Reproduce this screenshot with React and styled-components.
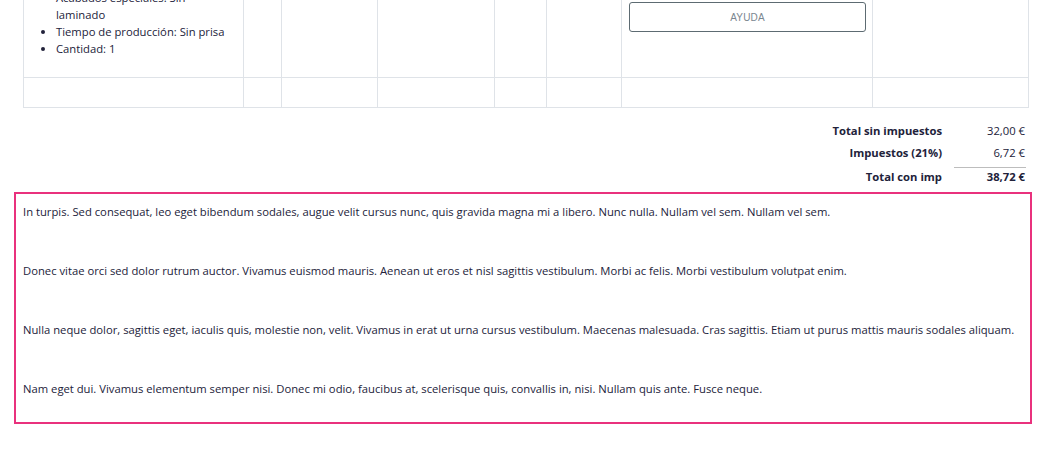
import React from "react";
import styled, { createGlobalStyle } from "styled-components";

const GlobalStyle = createGlobalStyle`
    body {
        margin: 0;
        background: #fff;
        font-family: "Open Sans", "Liberation Sans", sans-serif;
        color: #22223a;
        font-size: 11.25px;
    }
`;

const Page = styled.div`
    width: 1018px;
    padding: 0 0 0 14px;
    margin-top: -12px;
`;

const OrderTable = styled.table`
    margin: 0 0 0 9px;
    width: 1006px;
    border-collapse: collapse;
    table-layout: fixed;
    border: 1px solid #dfe3e8;
`;

const Cell = styled.td`
    border: 1px solid #dfe3e8;
    vertical-align: top;
    padding: ${(p) => p.$pad || "0 8px"};
    height: ${(p) => p.$h || "auto"};
`;

const Specs = styled.ul`
    margin: 0 0 20px 0;
    padding-left: 24px;
    line-height: 17px;
    font-size: 11.25px;
`;

const HelpButton = styled.button`
    display: block;
    width: 100%;
    height: 30px;
    background: #fff;
    border: 1px solid #5d6b72;
    border-radius: 3px;
    font-family: "Liberation Sans", Arial, sans-serif;
    font-size: 10px;
    color: #7b8790;
    letter-spacing: 0.2px;
    cursor: pointer;
`;

const Totals = styled.div`
    display: grid;
    grid-template-columns: auto 72px;
    column-gap: 12px;
    justify-content: end;
    margin: 12px 6px 0 0;
`;

const Label = styled.div`
    font-weight: 700;
    text-align: right;
    line-height: ${(p) => (p.$last ? "17px" : "22px")};
    margin-top: ${(p) => (p.$last ? "4px" : "0")};
`;

const Value = styled.div`
    text-align: right;
    line-height: ${(p) => (p.$last ? "17px" : "22px")};
    padding-right: 1px;
    font-weight: ${(p) => (p.$last ? 700 : 400)};
    border-top: ${(p) => (p.$last ? "1px solid #bdbdbd" : "none")};
    margin-top: ${(p) => (p.$last ? "3px" : "0")};
`;

const NoteBox = styled.div`
    box-sizing: border-box;
    margin-top: 7px;
    height: 232px;
    border: 2px solid #e9317d;
    padding: 9px 7px 0;
`;

const Para = styled.p`
    margin: 0;
    line-height: 18px;
    font-size: 11.25px;
    & + & {
        margin-top: 41px;
    }
`;

const widths = [220, 38, 96, 117, 52, 75, 251, 156];

const paragraphs = [
    "In turpis. Sed consequat, leo eget bibendum sodales, augue velit cursus nunc, quis gravida magna mi a libero. Nunc nulla. Nullam vel sem. Nullam vel sem.",
    "Donec vitae orci sed dolor rutrum auctor. Vivamus euismod mauris. Aenean ut eros et nisl sagittis vestibulum. Morbi ac felis. Morbi vestibulum volutpat enim.",
    "Nulla neque dolor, sagittis eget, iaculis quis, molestie non, velit. Vivamus in erat ut urna cursus vestibulum. Maecenas malesuada. Cras sagittis. Etiam ut purus mattis mauris sodales aliquam.",
    "Nam eget dui. Vivamus elementum semper nisi. Donec mi odio, faucibus at, scelerisque quis, convallis in, nisi. Nullam quis ante. Fusce neque.",
];

function App() {
    return (
        <Page>
            <GlobalStyle />
            <OrderTable>
                <colgroup>
                    {widths.map((w, i) => (
                        <col key={i} style={{ width: w }} />
                    ))}
                </colgroup>
                <tbody>
                    <tr>
                        <Cell>
                            <Specs>
                                <li>Acabados especiales: Sin laminado</li>
                                <li>Tiempo de producción: Sin prisa</li>
                                <li>Cantidad: 1</li>
                            </Specs>
                        </Cell>
                        <Cell />
                        <Cell />
                        <Cell />
                        <Cell />
                        <Cell />
                        <Cell $pad="13px 6px 0 7px">
                            <HelpButton>AYUDA</HelpButton>
                        </Cell>
                        <Cell />
                    </tr>
                    <tr>
                        {widths.map((w, i) => (
                            <Cell key={i} $h="29px" />
                        ))}
                    </tr>
                </tbody>
            </OrderTable>
            <Totals>
                <Label>Total sin impuestos</Label>
                <Value>32,00 €</Value>
                <Label>Impuestos (21%)</Label>
                <Value>6,72 €</Value>
                <Label $last>Total con imp</Label>
                <Value $last>38,72 €</Value>
            </Totals>
            <NoteBox>
                {paragraphs.map((t, i) => (
                    <Para key={i}>{t}</Para>
                ))}
            </NoteBox>
        </Page>
    );
}

export default App;
